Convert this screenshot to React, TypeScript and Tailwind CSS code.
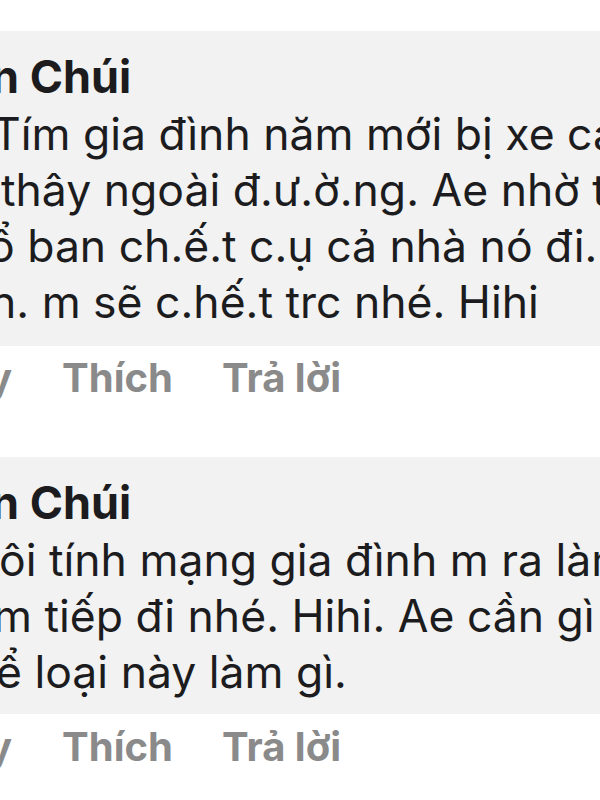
import React from "react";

const font = { fontFamily: "Inter, 'Noto Sans', sans-serif" };

function Line({ text, offset }: { text: string; offset: string }) {
  return (
    <div className={`whitespace-nowrap h-[56px] leading-[56px] text-[44.5px] text-[#1c1c1e] ${offset}`}>
      {text}
    </div>
  );
}

export default function App() {
  return (
    <div className="w-[600px] h-[800px] bg-white overflow-hidden" style={font}>
      <div className="h-[31px]" />
      <div className="bg-[#f2f2f2] overflow-hidden h-[315px] pt-[17px]">
        <div className="whitespace-nowrap h-[58px] leading-[58px] text-[45px] font-bold text-[#1c1c1e] ml-[-9px]">
          n Chúi
        </div>
        <Line text="Tím gia đình năm mới bị xe cán" offset="ml-[-8px]" />
        <Line text="thây ngoài đ.ư.ờ.ng. Ae nhờ thầy" offset="ml-[1px]" />
        <Line text="ổ ban ch.ế.t c.ụ cả nhà nó đi..." offset="ml-[-12px]" />
        <Line text="n. m sẽ c.hế.t trc nhé. Hihi" offset="ml-[-10px]" />
      </div>
      <div className="flex items-center h-[48px] mt-[8px] text-[40px] font-bold text-[#8a8a8a] whitespace-nowrap">
        <span className="ml-[-12px]">y</span>
        <span className="ml-[50px]">Thích</span>
        <span className="ml-[49px]">Trả lời</span>
      </div>
      <div className="h-[55px]" />
      <div className="bg-[#f2f2f2] overflow-hidden h-[257px] pt-[17px]">
        <div className="whitespace-nowrap h-[58px] leading-[58px] text-[45px] font-bold text-[#1c1c1e] ml-[-9px]">
          n Chúi
        </div>
        <Line text="ôi tính mạng gia đình m ra làm" offset="ml-[-1px]" />
        <Line text="m tiếp đi nhé. Hihi. Ae cần gì" offset="ml-[-7px]" />
        <Line text="ể loại này làm gì." offset="ml-[-4px]" />
      </div>
      <div className="flex items-center h-[48px] mt-[9px] text-[40px] font-bold text-[#8a8a8a] whitespace-nowrap">
        <span className="ml-[-12px]">y</span>
        <span className="ml-[50px]">Thích</span>
        <span className="ml-[49px]">Trả lời</span>
      </div>
    </div>
  );
}
